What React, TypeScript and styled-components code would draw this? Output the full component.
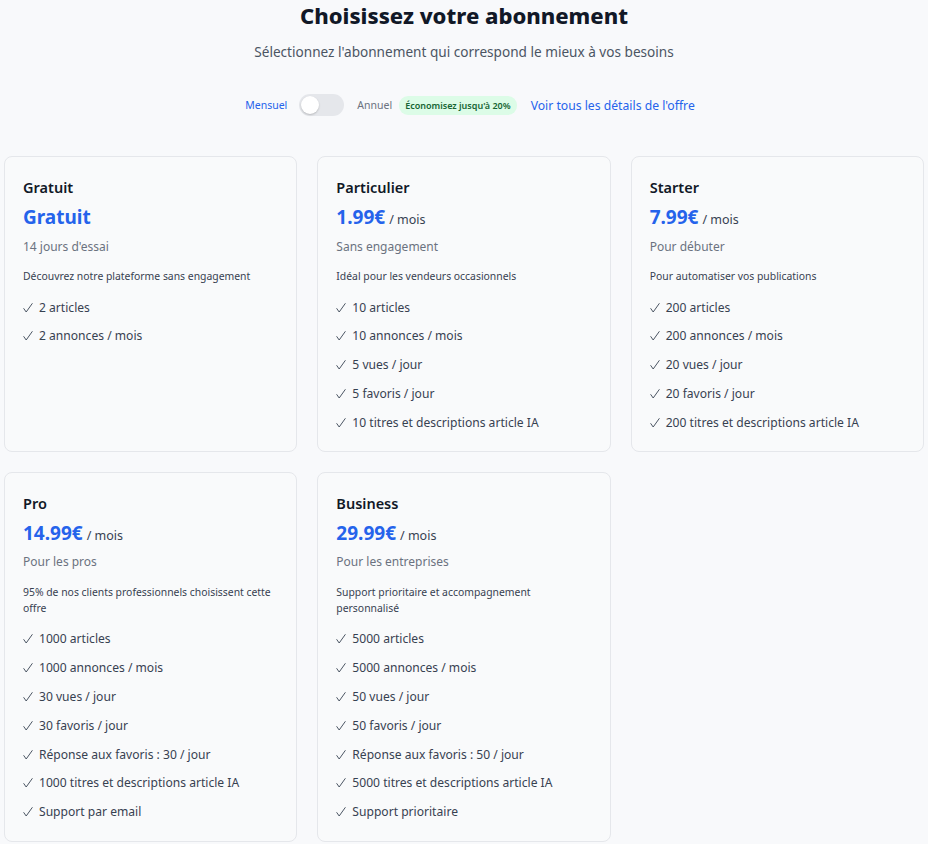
import styled, { createGlobalStyle } from "styled-components";

const GlobalStyle = createGlobalStyle`
  body {
    margin: 0;
    background: #f8f9fb;
    font-family: "Noto Sans", "Open Sans", sans-serif;
    color: #111827;
  }
`;

type Plan = {
  name: string;
  price: string;
  perMonth: boolean;
  subtitle: string;
  description: string;
  features: string[];
};

const plans: Plan[] = [
  {
    name: "Gratuit",
    price: "Gratuit",
    perMonth: false,
    subtitle: "14 jours d'essai",
    description: "Découvrez notre plateforme sans engagement",
    features: ["2 articles", "2 annonces / mois"],
  },
  {
    name: "Particulier",
    price: "1.99€",
    perMonth: true,
    subtitle: "Sans engagement",
    description: "Idéal pour les vendeurs occasionnels",
    features: [
      "10 articles",
      "10 annonces / mois",
      "5 vues / jour",
      "5 favoris / jour",
      "10 titres et descriptions article IA",
    ],
  },
  {
    name: "Starter",
    price: "7.99€",
    perMonth: true,
    subtitle: "Pour débuter",
    description: "Pour automatiser vos publications",
    features: [
      "200 articles",
      "200 annonces / mois",
      "20 vues / jour",
      "20 favoris / jour",
      "200 titres et descriptions article IA",
    ],
  },
  {
    name: "Pro",
    price: "14.99€",
    perMonth: true,
    subtitle: "Pour les pros",
    description: "95% de nos clients professionnels choisissent cette offre",
    features: [
      "1000 articles",
      "1000 annonces / mois",
      "30 vues / jour",
      "30 favoris / jour",
      "Réponse aux favoris : 30 / jour",
      "1000 titres et descriptions article IA",
      "Support par email",
    ],
  },
  {
    name: "Business",
    price: "29.99€",
    perMonth: true,
    subtitle: "Pour les entreprises",
    description: "Support prioritaire et accompagnement personnalisé",
    features: [
      "5000 articles",
      "5000 annonces / mois",
      "50 vues / jour",
      "50 favoris / jour",
      "Réponse aux favoris : 50 / jour",
      "5000 titres et descriptions article IA",
      "Support prioritaire",
    ],
  },
];

const CheckMark = () => (
  <Check viewBox="0 0 10 10" width="10" height="10" aria-hidden="true">
    <polyline points="0.8,5.6 3.2,9 9.2,0.6" />
  </Check>
);

const App = () => {
  return (
    <Page>
      <GlobalStyle />
      <Header>
        <Title>Choisissez votre abonnement</Title>
        <Subtitle>
          Sélectionnez l'abonnement qui correspond le mieux à vos besoins
        </Subtitle>
      </Header>
      <ToggleRow>
        <PeriodLabel active>Mensuel</PeriodLabel>
        <Switch>
          <Knob />
        </Switch>
        <PeriodLabel>Annuel</PeriodLabel>
        <SaveBadge>Économisez jusqu'à 20%</SaveBadge>
        <DetailsLink href="#">Voir tous les détails de l'offre</DetailsLink>
      </ToggleRow>
      <Grid>
        {plans.map((p) => (
          <Card key={p.name}>
            <PlanName>{p.name}</PlanName>
            <PriceLine>
              <Price>{p.price}</Price>
              {p.perMonth && <Per>/ mois</Per>}
            </PriceLine>
            <PlanSub>{p.subtitle}</PlanSub>
            <Description>{p.description}</Description>
            <Features>
              {p.features.map((f) => (
                <Feature key={f}>
                  <CheckMark />
                  {f}
                </Feature>
              ))}
            </Features>
          </Card>
        ))}
      </Grid>
    </Page>
  );
};

const Page = styled.div`
  padding: 1px 4px 4px;
`;

const Header = styled.div`
  text-align: center;
`;

const Title = styled.h1`
  margin: 0;
  font-size: 22px;
  line-height: 28px;
  font-weight: 800;
  color: #111827;
`;

const Subtitle = styled.p`
  margin: 13px 0 0;
  font-size: 13.6px;
  line-height: 20px;
  color: #4b5563;
`;

const ToggleRow = styled.div`
  display: flex;
  align-items: center;
  justify-content: center;
  margin-top: 31px;
  padding-left: 12px;
  height: 24px;
`;

const PeriodLabel = styled.span<{ active?: boolean }>`
  font-size: 10.5px;
  color: ${(p) => (p.active ? "#2563eb" : "#6b7280")};
`;

const Switch = styled.div`
  width: 45px;
  height: 22px;
  border-radius: 11px;
  background: #e5e7eb;
  margin: 0 13px 0 12px;
  display: flex;
  align-items: center;
  padding: 0 2px;
  box-sizing: border-box;
`;

const Knob = styled.div`
  width: 18px;
  height: 18px;
  border-radius: 50%;
  background: #fff;
  box-shadow: 0 1px 2px rgba(0, 0, 0, 0.2);
`;

const SaveBadge = styled.span`
  margin-left: 7px;
  background: #dcfce7;
  color: #166534;
  font-size: 9px;
  font-weight: 600;
  padding: 3px 6px;
  border-radius: 9px;
`;

const DetailsLink = styled.a`
  margin-left: 14px;
  font-size: 12.2px;
  color: #2563eb;
  text-decoration: none;
`;

const Grid = styled.div`
  display: grid;
  grid-template-columns: repeat(3, 1fr);
  gap: 20px;
  margin-top: 39px;
`;

const Card = styled.div`
  border: 1px solid #e5e7eb;
  border-radius: 8px;
  background: #f9fafb;
  padding: 18px 19px 13.5px 18px;
`;

const PlanName = styled.h3`
  margin: 0;
  font-size: 14.5px;
  line-height: 24px;
  font-weight: 600;
  color: #111827;
`;

const PriceLine = styled.div`
  margin-top: 5px;
  display: flex;
  align-items: baseline;
`;

const Price = styled.span`
  font-size: 19px;
  font-weight: 700;
  color: #2563eb;
`;

const Per = styled.span`
  margin-left: 4px;
  font-size: 12.5px;
  color: #374151;
`;

const PlanSub = styled.div`
  margin-top: 7.5px;
  font-size: 12px;
  color: #6b7280;
`;

const Description = styled.p`
  margin: 13.5px 0 0;
  font-size: 10.4px;
  line-height: 16px;
  color: #374151;
`;

const Features = styled.ul`
  list-style: none;
  margin: 9.5px 0 0;
  padding: 0;
`;

const Feature = styled.li`
  font-size: 12.1px;
  line-height: 28.8px;
  color: #374151;
`;

const Check = styled.svg`
  margin-right: 6px;
  vertical-align: -1px;
  fill: none;
  stroke: #4b5563;
  stroke-width: 1;
  stroke-linecap: round;
  stroke-linejoin: round;
`;

export default App;
